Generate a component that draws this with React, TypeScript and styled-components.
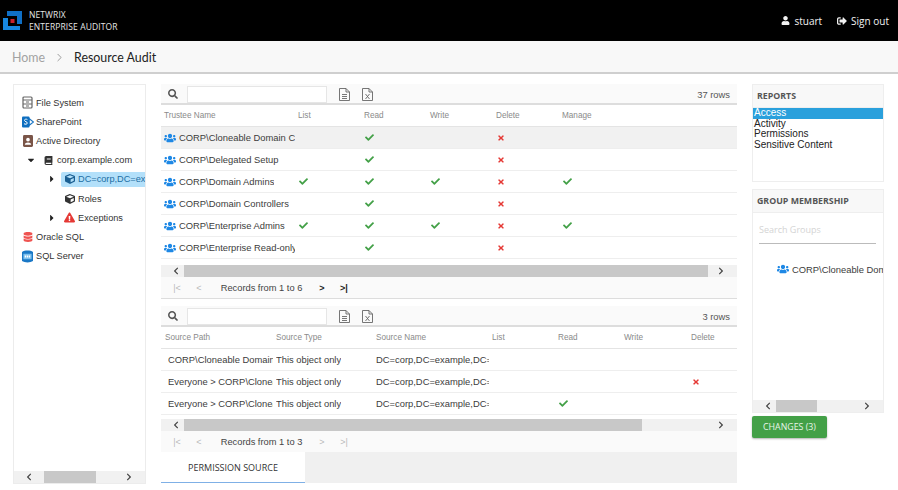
import React from 'react';
import styled, { createGlobalStyle } from 'styled-components';
import { ChevronRight } from 'lucide-react';
import {
  FaUsers, FaCheck, FaTimes, FaUser, FaSignOutAlt, FaSearch, FaCube, FaBook,
  FaExclamationTriangle, FaDatabase, FaCaretRight, FaCaretDown, FaChevronLeft,
  FaChevronRight,
} from 'react-icons/fa';

const GlobalStyle = createGlobalStyle`
  html, body { margin: 0; padding: 0; background: #fff; }
  body { font-family: "Liberation Sans", Arial, sans-serif; width: 898px; height: 490px; overflow: hidden; }
`;

const Logo = () => (
  <svg width="20" height="20" viewBox="0 0 20 20">
    <path d="M4 0H19V13H14V5H4Z" fill="#0f6fc6" />
    <path d="M0 7H5V15H17V19H0Z" fill="#1787e0" />
    <rect x="7.5" y="8" width="4" height="4" fill="#c8202c" />
  </svg>
);

const DocIcon = ({ excel }: { excel?: boolean }) => (
  <svg width="11" height="13" viewBox="0 0 11 13" fill="none" stroke="#666" strokeWidth="0.9">
    <path d="M1 .5H7L10.5 4V12.5H.5V.5Z" />
    <path d="M7 .5V4H10.5" />
    {excel ? <path d="M3.5 6L7.5 11M7.5 6L3.5 11" /> : <path d="M3 6.5H8M3 8.5H8M3 10.5H8" />}
  </svg>
);

const FileSystemIcon = () => (
  <svg width="11" height="13" viewBox="0 0 11 13" fill="none" stroke="#666" strokeWidth="1.2">
    <rect x="1" y="1" width="9" height="11" rx="1" />
    <path d="M1 4H10M1 8H10M4 6H7M4 10H7" />
  </svg>
);

const SharePointIcon = () => (
  <svg width="12" height="12" viewBox="0 0 12 12">
    <path d="M7 2.5L11.5 6L7 9.5Z" fill="#fff" stroke="#1b76c4" strokeWidth="1.2" />
    <rect x="0" y="0.5" width="7.5" height="11" rx="1" fill="#0f6fc0" />
    <path d="M5.4 3.6C4.4 2.8 2.3 3.1 2.5 4.5c.2 1.4 2.9 1 2.8 2.6C5.2 8.4 3.1 8.5 2 7.7" fill="none" stroke="#fff" strokeWidth="1" />
  </svg>
);

const DirectoryIcon = () => (
  <svg width="10" height="12" viewBox="0 0 11 13">
    <rect width="11" height="13" rx="1.5" fill="#7a5548" />
    <circle cx="5.5" cy="5" r="2" fill="#fff" />
    <path d="M2 10.5C2 7.5 9 7.5 9 10.5Z" fill="#fff" />
  </svg>
);

const SqlServerIcon = () => (
  <svg width="11" height="13" viewBox="0 0 12 14">
    <path d="M0 2C3 0 9 0 12 2V12C9 14 3 14 0 12Z" fill="#1a78c6" />
    <rect x="1.5" y="4" width="9" height="6" fill="#7cc0ee" />
    <path d="M3 7H9" stroke="#fff" strokeWidth="2" strokeDasharray="1.5 .7" />
  </svg>
);

type Cell = { kind: 'text'; value: string; group?: boolean } | { kind: 'yes' } | { kind: 'no' } | { kind: 'none' };
const T = (value: string, group = false): Cell => ({ kind: 'text', value, group });
const Y: Cell = { kind: 'yes' };
const N: Cell = { kind: 'no' };
const E: Cell = { kind: 'none' };

const trusteeRows: Cell[][] = [
  [T('CORP\\Cloneable Domain Controllers', true), E, Y, E, N, E],
  [T('CORP\\Delegated Setup', true), E, Y, E, N, E],
  [T('CORP\\Domain Admins', true), Y, Y, Y, N, Y],
  [T('CORP\\Domain Controllers', true), E, Y, E, N, E],
  [T('CORP\\Enterprise Admins', true), Y, Y, Y, N, Y],
  [T('CORP\\Enterprise Read-only Domain', true), E, Y, E, N, E],
];

const sourceRows: Cell[][] = [
  [T('CORP\\Cloneable Domain Controllers'), T('This object only'), T('DC=corp,DC=example,DC=com'), E, E, E, E],
  [T('Everyone > CORP\\Cloneable Domain'), T('This object only'), T('DC=corp,DC=example,DC=com'), E, E, E, N],
  [T('Everyone > CORP\\Cloneable Domain'), T('This object only'), T('DC=corp,DC=example,DC=com'), E, Y, E, E],
];

const TRUSTEE_COLS = '134px 66px 66px 66px 66px 66px 1fr';
const SOURCE_HEAD_COLS = '111px 100px 116px 66px 66px 67px 66px 1fr';
const SOURCE_BODY_COLS = '108px 100px 116px 66px 66px 67px 66px 1fr';

const renderCell = (cell: Cell, key: number) => {
  if (cell.kind === 'text') {
    return (
      <Td key={key}>
        {cell.group && <GroupIcon />}
        <Clip>{cell.value}</Clip>
      </Td>
    );
  }
  if (cell.kind === 'yes') return <Td key={key}><Yes /></Td>;
  if (cell.kind === 'no') return <Td key={key}><No /></Td>;
  return <Td key={key} />;
};

const ScrollBar = ({ lead, size }: { lead: number; size: number }) => (
  <Scroll>
    <ArrowLeft $w={lead}><FaChevronLeft /></ArrowLeft>
    <Track>
      <Thumb $w={size} />
    </Track>
    <ArrowRight><FaChevronRight /></ArrowRight>
  </Scroll>
);

const Toolbar = ({ count }: { count: string }) => (
  <Tools>
    <FaSearch color="#555" size={10} />
    <SearchBox />
    <DocIcon />
    <DocIcon excel />
    <Rows>{count}</Rows>
  </Tools>
);

const Pager = ({ label, more }: { label: string; more?: boolean }) => (
  <PagerBar>
    <PageBtn $on={false}>|&lt;</PageBtn>
    <PageBtn $on={false}>&lt;</PageBtn>
    <PageLabel>{label}</PageLabel>
    <PageBtn $on={!!more}>&gt;</PageBtn>
    <PageBtn $on={!!more}>&gt;|</PageBtn>
  </PagerBar>
);

const App: React.FC = () => (
  <>
    <GlobalStyle />
    <Header>
      <Brand>
        <Logo />
        <BrandText>NETWRIX<br />ENTERPRISE AUDITOR</BrandText>
      </Brand>
      <HeaderLinks>
        <HeaderLink><FaUser size={9} />stuart</HeaderLink>
        <HeaderLink><FaSignOutAlt size={10} />Sign out</HeaderLink>
      </HeaderLinks>
    </Header>
    <Crumbs>
      <Home>Home</Home>
      <Sep><ChevronRight size={13} strokeWidth={1.5} /></Sep>
      <Current>Resource Audit</Current>
    </Crumbs>
    <Main>
      <TreePanel>
        <TreeBody>
          <TreeRow $indent={0}><IconSlot><FileSystemIcon /></IconSlot>File System</TreeRow>
          <TreeRow $indent={0}><IconSlot><SharePointIcon /></IconSlot>SharePoint</TreeRow>
          <TreeRow $indent={0}><IconSlot><DirectoryIcon /></IconSlot>Active Directory</TreeRow>
          <TreeRow $indent={21}><Caret><FaCaretDown /></Caret><IconSlot><FaBook size={9} color="#333" /></IconSlot>corp.example.com</TreeRow>
          <TreeRow $indent={42}>
            <Caret><FaCaretRight /></Caret>
            <Selected><IconSlot><FaCube size={10} color="#1b5f92" /></IconSlot>DC=corp,DC=example</Selected>
          </TreeRow>
          <TreeRow $indent={42}><IconSlot><FaCube size={10} color="#333" /></IconSlot>Roles</TreeRow>
          <TreeRow $indent={42}><Caret><FaCaretRight /></Caret><IconSlot><FaExclamationTriangle size={11} color="#e53935" /></IconSlot>Exceptions</TreeRow>
          <TreeRow $indent={0}><IconSlot><FaDatabase size={10} color="#ef5350" /></IconSlot>Oracle SQL</TreeRow>
          <TreeRow $indent={0}><IconSlot><SqlServerIcon /></IconSlot>SQL Server</TreeRow>
        </TreeBody>
        <ScrollBar lead={30} size={52} />
      </TreePanel>

      <Center>
        <Toolbar count="37 rows" />
        <HeadRow $cols={TRUSTEE_COLS} $pad={3}>
          {['Trustee Name', 'List', 'Read', 'Write', 'Delete', 'Manage'].map((h) => <Th key={h}>{h}</Th>)}
        </HeadRow>
        {trusteeRows.map((row, i) => (
          <BodyRow key={i} $cols={TRUSTEE_COLS} $active={i === 0} $pad={3}>
            {row.map(renderCell)}
          </BodyRow>
        ))}
        <Gap $h={6} />
        <ScrollBar lead={23} size={524} />
        <Pager label="Records from 1 to 6" more />
        <Divider />
        <Toolbar count="3 rows" />
        <HeadRow $cols={SOURCE_HEAD_COLS} $pad={4}>
          {['Source Path', 'Source Type', 'Source Name', 'List', 'Read', 'Write', 'Delete'].map((h) => <Th key={h}>{h}</Th>)}
        </HeadRow>
        {sourceRows.map((row, i) => (
          <BodyRow key={i} $cols={SOURCE_BODY_COLS} $pad={7}>
            {row.map(renderCell)}
          </BodyRow>
        ))}
        <Gap $h={4} />
        <ScrollBar lead={23} size={458} />
        <Pager label="Records from 1 to 3" />
        <Tabs>
          <Tab>PERMISSION SOURCE</Tab>
        </Tabs>
      </Center>

      <Side>
        <ReportsCard>
          <CardTitle>REPORTS</CardTitle>
          <ReportList>
            <ReportItem $on>Access</ReportItem>
            <ReportItem>Activity</ReportItem>
            <ReportItem>Permissions</ReportItem>
            <ReportItem>Sensitive Content</ReportItem>
          </ReportList>
        </ReportsCard>
        <GroupCard>
          <CardTitle>GROUP MEMBERSHIP</CardTitle>
          <GroupBody>
            <GroupSearch>Search Groups</GroupSearch>
            <GroupItem><GroupIcon /><Clip>CORP\Cloneable Domain Controllers</Clip></GroupItem>
          </GroupBody>
          <ScrollBar lead={23} size={41} />
        </GroupCard>
        <ChangesButton>CHANGES (3)</ChangesButton>
      </Side>
    </Main>
  </>
);

export default App;

// Styled Components
const Header = styled.header`
  height: 41px;
  background: #000;
  color: #fff;
  display: flex;
  align-items: center;
  justify-content: space-between;
  padding: 0 9px 0 3px;
  font-family: "Open Sans", sans-serif;
`;

const Brand = styled.div`
  display: flex;
  align-items: center;
  gap: 6px;
`;

const BrandText = styled.div`
  font-size: 8.5px;
  line-height: 11.5px;
  color: #e6e6e6;
  letter-spacing: 0.1px;
`;

const HeaderLinks = styled.div`
  display: flex;
  gap: 15px;
`;

const HeaderLink = styled.span`
  display: flex;
  align-items: center;
  gap: 4px;
  font-size: 10px;
  color: #f2f2f2;
`;

const Crumbs = styled.nav`
  height: 33px;
  box-sizing: border-box;
  background: #f8f8f8;
  border-bottom: 2px solid #cfcfcf;
  display: flex;
  align-items: center;
  padding: 1px 12px 0;
  font-family: Lato, sans-serif;
  font-size: 12.4px;
`;

const Home = styled.span`
  color: #a2a2a2;
`;

const Sep = styled.span`
  display: flex;
  color: #888;
  margin: 0 8px;
`;

const Current = styled.span`
  color: #222;
`;

const Main = styled.main`
  display: flex;
  padding: 10px 14px 0 13px;
  height: 400px;
`;

const TreePanel = styled.aside`
  width: 133px;
  box-sizing: border-box;
  border: 1px solid #ececec;
  display: flex;
  flex-direction: column;
  margin-right: 15px;
  height: 400px;
`;

const TreeBody = styled.div`
  flex: 1;
  padding-top: 8px;
  overflow: hidden;
`;

const TreeRow = styled.div<{ $indent: number }>`
  height: 19.2px;
  display: flex;
  align-items: center;
  white-space: nowrap;
  padding-left: ${(p) => p.$indent + 7}px;
  font-size: 9.2px;
  color: #333;
`;

const Caret = styled.span`
  width: 15px;
  margin-left: -19px;
  margin-right: 4px;
  display: flex;
  justify-content: center;
  font-size: 10px;
  color: #222;
`;

const IconSlot = styled.span`
  width: 13px;
  margin-right: 2px;
  display: inline-flex;
  justify-content: center;
  align-items: center;
  flex-shrink: 0;
`;

const Selected = styled.span`
  flex: 1;
  height: 15px;
  display: flex;
  align-items: center;
  overflow: hidden;
  background: #b3e0fa;
  color: #1c6ea4;
  border-radius: 2px 0 0 2px;
  padding-left: 2px;
  margin-left: -2px;
`;

const Center = styled.section`
  width: 576px;
  margin-right: 15px;
  display: flex;
  flex-direction: column;
`;

const Tools = styled.div`
  height: 21px;
  box-sizing: border-box;
  flex-shrink: 0;
  display: flex;
  align-items: center;
  background: #fafafa;
  border-bottom: 2px solid #ddd;
  padding: 1px 7px 0;
  svg:nth-of-type(2) { margin-left: 12px; }
  svg:nth-of-type(3) { margin-left: 12px; }
`;

const SearchBox = styled.div`
  width: 138px;
  height: 15px;
  margin-left: 9px;
  background: #fff;
  border: 1px solid #e6e6e6;
`;

const Rows = styled.span`
  margin-left: auto;
  font-size: 9.4px;
  color: #555;
`;

const HeadRow = styled.div<{ $cols: string; $pad: number }>`
  height: 22px;
  flex-shrink: 0;
  display: grid;
  grid-template-columns: ${(p) => p.$cols};
  align-items: center;
  box-sizing: border-box;
  padding-left: ${(p) => p.$pad}px;
  border-bottom: 1px solid #e4e4e4;
`;

const Th = styled.div`
  font-size: 8.2px;
  color: #8a8a8a;
`;

const BodyRow = styled.div<{ $cols: string; $active?: boolean; $pad: number }>`
  height: 22px;
  flex-shrink: 0;
  display: grid;
  grid-template-columns: ${(p) => p.$cols};
  align-items: center;
  box-sizing: border-box;
  padding-left: ${(p) => p.$pad}px;
  border-bottom: 1px solid #eee;
  background: ${(p) => (p.$active ? '#f1f1f1' : '#fff')};
`;

const Td = styled.div`
  display: flex;
  align-items: center;
  overflow: hidden;
  padding-right: 3px;
  font-size: 9.4px;
  color: #3c3c3c;
  min-width: 0;
`;

const Clip = styled.span`
  overflow: hidden;
  white-space: nowrap;
`;

const GroupIcon = styled(FaUsers)`
  width: 12px;
  height: 12px;
  margin-right: 3px;
  color: #1e88e5;
  flex-shrink: 0;
`;

const Yes = styled(FaCheck)`
  width: 9px;
  height: 9px;
  margin-left: 1px;
  color: #43a047;
`;

const No = styled(FaTimes)`
  width: 8px;
  height: 8px;
  margin-left: 1px;
  color: #e53935;
`;

const Gap = styled.div<{ $h: number }>`
  height: ${(p) => p.$h}px;
  flex-shrink: 0;
`;

const Scroll = styled.div`
  height: 12px;
  flex-shrink: 0;
  display: flex;
  align-items: center;
  background: #f1f1f1;
`;

const ArrowLeft = styled.span<{ $w: number }>`
  width: ${(p) => p.$w}px;
  box-sizing: border-box;
  padding-left: 11px;
  flex-shrink: 0;
  display: flex;
  font-size: 8px;
  color: #444;
`;

const ArrowRight = styled.span`
  box-sizing: border-box;
  padding-right: 12px;
  flex-shrink: 0;
  display: flex;
  font-size: 8px;
  color: #444;
`;

const Track = styled.div`
  flex: 1;
  height: 100%;
  display: flex;
`;

const Thumb = styled.div<{ $w: number }>`
  width: ${(p) => p.$w}px;
  background: #c8c8c8;
`;

const PagerBar = styled.div`
  height: 21px;
  flex-shrink: 0;
  display: flex;
  align-items: center;
  background: #fafafa;
  padding-left: 5px;
  font-size: 9.3px;
  color: #444;
`;

const PageBtn = styled.span<{ $on: boolean }>`
  width: 22px;
  text-align: center;
  font-size: 9px;
  font-weight: ${(p) => (p.$on ? 700 : 400)};
  color: ${(p) => (p.$on ? '#222' : '#bbb')};
`;

const PageLabel = styled.span`
  width: 101px;
  padding-left: 2px;
  box-sizing: border-box;
  text-align: center;
`;

const Divider = styled.div`
  height: 7px;
  flex-shrink: 0;
  border-top: 1px solid #ddd;
`;

const Tabs = styled.div`
  height: 31px;
  flex-shrink: 0;
  display: flex;
  background: #f0f0f0;
`;

const Tab = styled.div`
  width: 144px;
  box-sizing: border-box;
  background: #fff;
  border-bottom: 1.5px solid #7fb0e6;
  display: flex;
  align-items: center;
  justify-content: center;
  font-family: "Open Sans", sans-serif;
  font-size: 9px;
  color: #333;
`;

const Side = styled.aside`
  width: 132px;
  display: flex;
  flex-direction: column;
`;

const ReportsCard = styled.div`
  height: 98px;
  box-sizing: border-box;
  border: 1px solid #eee;
  flex-shrink: 0;
`;

const CardTitle = styled.div`
  height: 23px;
  box-sizing: border-box;
  background: #f8f8f8;
  border-bottom: 1px solid #eee;
  display: flex;
  align-items: center;
  padding-left: 4px;
  font-family: "Open Sans", sans-serif;
  font-size: 8.8px;
  font-weight: 700;
  color: #555;
`;

const ReportList = styled.div`
  font-size: 10px;
  line-height: 10.5px;
  color: #222;
`;

const ReportItem = styled.div<{ $on?: boolean }>`
  padding-left: 1px;
  background: ${(p) => (p.$on ? '#2aa0dc' : 'transparent')};
  color: ${(p) => (p.$on ? '#fff' : '#222')};
`;

const GroupCard = styled.div`
  margin-top: 7px;
  height: 224px;
  box-sizing: border-box;
  border: 1px solid #eee;
  display: flex;
  flex-direction: column;
  flex-shrink: 0;
`;

const GroupBody = styled.div`
  flex: 1;
  overflow: hidden;
  padding-left: 6px;
`;

const GroupSearch = styled.div`
  height: 31px;
  box-sizing: border-box;
  margin-right: 7px;
  border-bottom: 1px solid #bbb;
  display: flex;
  align-items: center;
  padding-top: 2px;
  font-family: "Open Sans", sans-serif;
  font-size: 9px;
  color: #d4d4d4;
`;

const GroupItem = styled.div`
  display: flex;
  align-items: center;
  margin-top: 19px;
  padding-left: 18px;
  font-size: 9.4px;
  color: #3c3c3c;
  white-space: nowrap;
`;

const ChangesButton = styled.button`
  margin-top: 3px;
  width: 75px;
  height: 22px;
  border: none;
  border-radius: 2px;
  background: #43a047;
  box-shadow: 0 1px 2px rgba(0, 0, 0, 0.3);
  color: #e8f5e9;
  font-family: "Open Sans", sans-serif;
  font-size: 8.8px;
  padding: 0;
`;
